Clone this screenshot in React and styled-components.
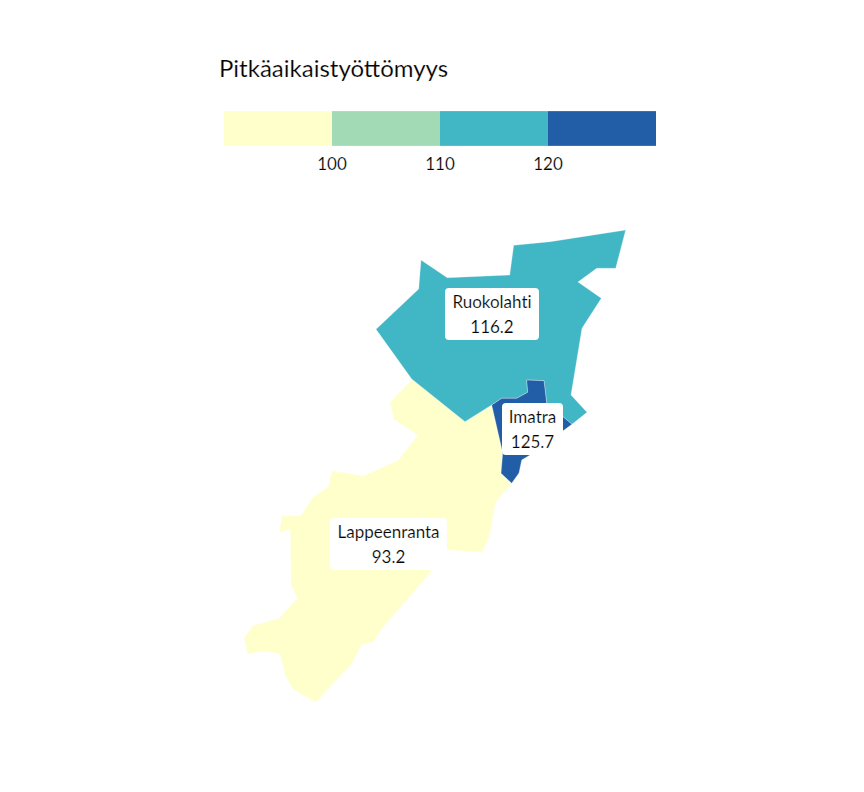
import React from "react";
import styled, { createGlobalStyle } from "styled-components";

const GlobalStyle = createGlobalStyle`
    html, body {
        margin: 0;
        padding: 0;
        background: #fff;
    }
`;

const Chart = styled.div`
    width: 864px;
    height: 792px;
    overflow: hidden;
    display: flex;
    flex-direction: column;
    font-family: Lato, "Liberation Sans", sans-serif;
    color: #000;
`;

const Title = styled.h3`
    margin: 53px 0 0 219px;
    height: 29px;
    font-size: 24px;
    line-height: 29px;
    font-weight: 400;
    -webkit-text-stroke: 0.2px #fff;
`;

const Legend = styled.div`
    margin: 29px 0 0 224px;
    width: 432px;
`;

const Scale = styled.div`
    display: flex;
    height: 35px;
`;

const Step = styled.div`
    flex: 1;
    background: ${props => props.color};
    box-shadow: inset 0 1px 0 rgba(255, 255, 255, 0.12), inset 0 -1px 0 rgba(255, 255, 255, 0.12);
`;

const Ticks = styled.div`
    position: relative;
    height: 44px;
`;

const Tick = styled.span`
    position: absolute;
    top: 7px;
    left: ${props => props.at}px;
    transform: translateX(-50%);
    font-size: 17px;
    line-height: 22px;
    color: #000;
    -webkit-text-stroke: 0.2px #fff;
`;

const MapArea = styled.div`
    position: relative;
    flex: 1;
`;

const MapSvg = styled.svg`
    display: block;
    width: 864px;
    height: 602px;
`;

const Region = styled.polygon`
    fill: ${props => props.color};
    stroke: rgba(255, 255, 255, 0.6);
    stroke-width: 0.5;
`;

const Label = styled.div`
    position: absolute;
    left: ${props => props.x}px;
    top: ${props => props.y}px;
    width: ${props => props.w}px;
    height: 52px;
    box-sizing: border-box;
    padding-top: 1px;
    background: #fff;
    border-radius: 4px;
    text-align: center;
    font-size: 17px;
    line-height: 25px;
    font-variant-ligatures: none;
    color: #000;
    -webkit-text-stroke: 0.2px #fff;
`;

const colors = ["#ffffcc", "#a1dab4", "#41b6c4", "#225ea8"];

const ticks = [
    { value: 100, at: 108 },
    { value: 110, at: 216 },
    { value: 120, at: 324 },
];

const regions = [
    {
        color: colors[0],
        points: "412.7,379 390,402.3 393.7,419.3 417.7,435 398.3,460 364,475.7 331.7,470.7 328.3,486.7 312.7,497.3 300.7,515.7 281.7,516 279.3,532.7 290.3,529.3 291,585 297.3,598.3 279,618.3 252.7,625.7 244,637.7 247.7,654.3 263.3,651 280,654 285,675 292.7,689 315.7,702.3 351.7,664 361.7,644.7 373.3,642 383.3,626.7 432.7,570 447.3,550 482.3,552.3 489.3,536.7 495.7,502.3 511.7,483.3 501,473.3 502.7,453 491.7,405 465,421.7",
    },
    {
        color: colors[2],
        points: "625.7,230 615.7,268.3 596.7,268.3 578,282 601.3,298.3 582,328.3 571,395 587,412.3 572,424.3 546.7,403 544,380.7 526.7,380 527.7,392.3 516.7,398.3 501.7,398.3 491.7,405 465,421.7 411.7,379 376,329.3 418.7,289 421,260 447.3,277.7 509.7,275 513.7,245.3 550,241.7",
    },
    {
        color: colors[3],
        points: "526.7,380 544,380.7 546.7,403 572,424.3 530,455 521.7,460 519,473 511.7,483.3 501,473.3 502.7,453 491.7,405 501.7,398.3 516.7,398.3 527.7,392.3",
    },
];

const labels = [
    { name: "Ruokolahti", value: "116.2", x: 445, y: 97.5, w: 94 },
    { name: "Imatra", value: "125.7", x: 502, y: 213, w: 61 },
    { name: "Lappeenranta", value: "93.2", x: 330, y: 327.5, w: 117 },
];

const App = () => (
    <Chart>
        <GlobalStyle />
        <Title>Pitkäaikaistyöttömyys</Title>
        <Legend>
            <Scale>
                {colors.map(color => <Step key={color} color={color} />)}
            </Scale>
            <Ticks>
                {ticks.map(tick => <Tick key={tick.value} at={tick.at}>{tick.value}</Tick>)}
            </Ticks>
        </Legend>
        <MapArea>
            <MapSvg viewBox="0 190 864 602">
                {regions.map(region => (
                    <Region key={region.color} color={region.color} points={region.points} />
                ))}
            </MapSvg>
            {labels.map(label => (
                <Label key={label.name} x={label.x} y={label.y} w={label.w}>
                    {label.name}
                    <br />
                    {label.value}
                </Label>
            ))}
        </MapArea>
    </Chart>
);

export default App;
